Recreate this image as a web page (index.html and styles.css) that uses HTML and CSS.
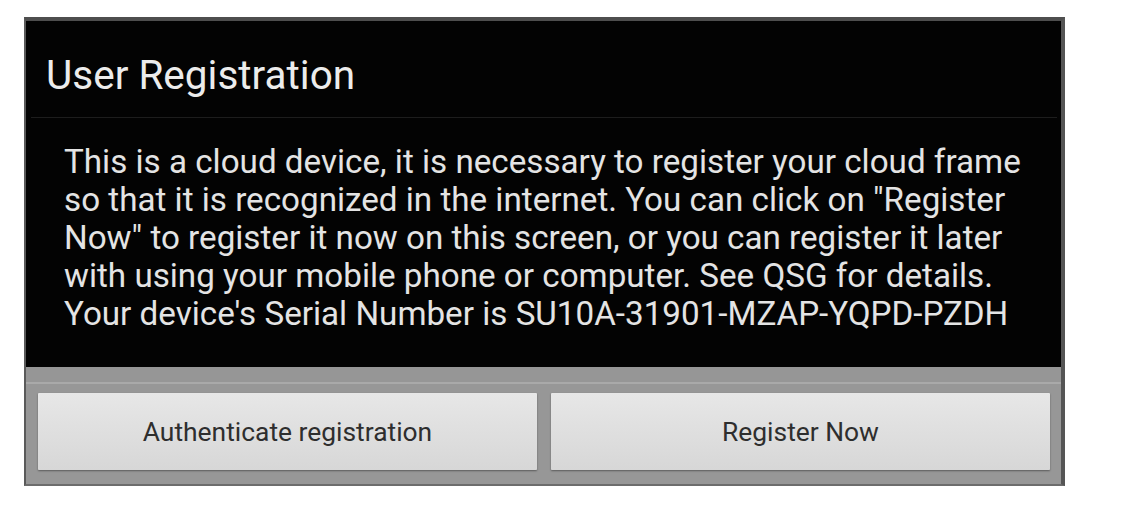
FILE: index.html
```html
<!DOCTYPE html>
<html lang="en">
<head>
<meta charset="utf-8">
<title>User Registration</title>
<link rel="stylesheet" href="styles.css">
</head>
<body>
<div class="dialog">
  <div class="header">
    <h1 class="title">User Registration</h1>
  </div>
  <div class="separator"></div>
  <div class="message">
    <p>This is a cloud device, it is necessary to register your cloud frame<br>so that it is recognized in the internet. You can click on "Register<br>Now" to register it now on this screen, or you can register it later<br>with using your mobile phone or computer. See QSG for details.<br>Your device's Serial Number is SU10A-31901-MZAP-YQPD-PZDH</p>
  </div>
  <div class="footer">
    <div class="footer-band"></div>
    <div class="buttons">
      <button class="btn">Authenticate registration</button>
      <button class="btn">Register Now</button>
    </div>
  </div>
</div>
</body>
</html>
```
FILE: styles.css
```css
html, body {
  margin: 0;
  padding: 0;
  background: #ffffff;
}

body {
  font-family: Roboto, "Noto Sans", "Liberation Sans", sans-serif;
}

.dialog {
  width: 1041px;
  box-sizing: border-box;
  margin: 17px 0 0 24px;
  border-top: 4px solid #4e4e4e;
  border-left: 2px solid #5a5a5a;
  border-right: 4px solid #555555;
  border-bottom: 2px solid #6c6c6c;
  background: #030303;
}

.header {
  height: 96px;
  box-sizing: border-box;
  padding: 34px 0 0 20px;
}

.title {
  margin: 0;
  font-size: 40.5px;
  line-height: 40px;
  font-weight: 400;
  color: #ececec;
}

.separator {
  height: 1px;
  margin: 0 4px 0 5px;
  background: #1d1d1d;
}

.message {
  padding: 25px 20px 34px 38px;
}

.message p {
  margin: 0;
  font-size: 33.2px;
  line-height: 38px;
  color: #e4e4e4;
  white-space: nowrap;
}

.footer {
  background: #999999;
}

.footer-band {
  height: 15px;
  background: #969696;
  border-bottom: 2px solid #a9a9a9;
}

.buttons {
  display: flex;
  gap: 14px;
  padding: 9px 11px 14px 12px;
  background: #979797;
}

.btn {
  flex: 1;
  height: 77px;
  border: 0;
  border-radius: 1px;
  background: linear-gradient(#e7e7e7, #d7d7d7);
  box-shadow: 0 1px 2px rgba(0, 0, 0, 0.4);
  font-family: Roboto, "Noto Sans", "Liberation Sans", sans-serif;
  font-size: 26.4px;
  color: #2e2e2e;
  display: flex;
  align-items: center;
  justify-content: center;
  padding: 0;
}
```
